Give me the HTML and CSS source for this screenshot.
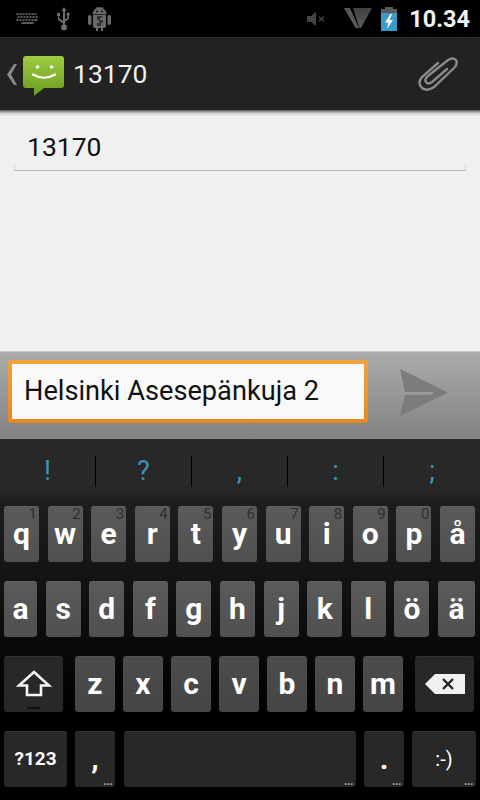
FILE: index.html
```html
<!DOCTYPE html>
<html lang="fi">
<head>
<meta charset="utf-8">
<title>13170</title>
<link rel="stylesheet" href="styles.css">
</head>
<body>
<div class="phone">
  <header class="status">
    <div class="status-left">
      <svg class="ic-kbd" width="23" height="12" viewBox="0 0 22 12"><g fill="#5a5a5a"><path d="M0 0h2v2H0zM3 0h2v2H3zM6 0h2v2H6zM9 0h2v2H9zM12 0h2v2h-2zM15 0h2v2h-2zM18 0h2v2h-2zM1 3h2v2H1zM4 3h2v2H4zM7 3h2v2H7zM10 3h2v2h-2zM13 3h2v2h-2zM16 3h2v2h-2zM19 3h2v2h-2zM0 6h2v2H0zM3 6h2v2H3zM6 6h2v2H6zM9 6h2v2H9zM12 6h2v2h-2zM15 6h2v2h-2zM18 6h3v2h-3zM5 9h12v2H5z"/></g></svg>
      <svg class="ic-usb" width="16" height="24" viewBox="0 0 16 24"><g fill="#6e6e6e"><path d="M8 0l2.500 4H9v14H7V4H5.500z"/><circle cx="8" cy="20.500" r="3"/><path d="M1 6h3v3H3.200v2.600L7 14v2.300L2 13V9H1zM12 5.500a1.700 1.700 0 1 1 0 3.400 1.700 1.700 0 0 1 0-3.400zM11.200 8.500h1.600v3.600L8.500 15v-2.200l2.700-1.500z"/></g></svg>
      <svg class="ic-droid" width="23" height="25" viewBox="0 0 23 25"><path d="M5 8a6.500 6.500 0 0 1 13 0zM8 1l2 3M15 1l-2 3" fill="#6a6a6a" stroke="#6a6a6a" stroke-width=".8"/><path d="M5 9h13v11a2 2 0 0 1-2 2h-1v3h-2v-3h-3v3H8v-3H7a2 2 0 0 1-2-2z" fill="#6a6a6a"/><rect y="9" width="3.500" height="10" rx="1.700" fill="#6a6a6a"/><rect x="19.500" y="9" width="3.500" height="10" rx="1.700" fill="#6a6a6a"/><path d="M9 10h5v2h-2v2h3v3h-2v3H9v-3h2v-3H9z" fill="#333"/><circle cx="9" cy="5.500" r=".9" fill="#000"/><circle cx="14" cy="5.500" r=".9" fill="#000"/></svg>
    </div>
    <div class="status-right">
      <svg class="ic-mute" width="20" height="14" viewBox="0 0 20 14"><path d="M0 4h4l5-4v14l-5-4H0z" fill="#444"/><path d="M12 4.500l5 5M17 4.500l-5 5" stroke="#444" stroke-width="1.300"/></svg>
      <svg class="ic-sig" width="28" height="21" viewBox="0 0 28 21"><defs><linearGradient id="w" x1="0" y1="0" x2="0" y2="1"><stop offset="0" stop-color="#404040"/><stop offset="1" stop-color="#5c5c5c"/></linearGradient></defs><path d="M0 0h6l9 20h-3.500z" fill="#585858"/><path d="M9 0h19l-11 20h-1.500z" fill="url(#w)"/></svg>
      <svg class="ic-bat" width="16" height="24" viewBox="1 0 16 24"><path d="M5 0h8v2h4v5H1V2h4z" fill="#5a5a5a"/><rect x="1" y="6" width="16" height="18" fill="#3a9cc8"/><path d="M10.500 7L5 15.500h3.500L7 22l6-9H9.500L12 7z" fill="#fff"/></svg>
      <span class="clock">10.34</span>
    </div>
  </header>

  <section class="actionbar">
    <div class="title-group">
      <svg class="ic-back" width="11" height="21" viewBox="0 0 11 21"><path d="M8 0h3L5 10.500 11 21H8L1 10.500z" fill="#8a8a8a"/></svg>
      <svg class="ic-msg" width="41" height="40" viewBox="0 0 41 40">
        <defs><linearGradient id="g" x1="0" y1="0" x2="0" y2="1"><stop offset="0" stop-color="#a0cc40"/><stop offset="1" stop-color="#6a9a20"/></linearGradient></defs>
        <path d="M3 0h35a3 3 0 0 1 3 3v26a3 3 0 0 1-3 3H21l-10 8v-8H3a3 3 0 0 1-3-3V3a3 3 0 0 1 3-3z" fill="url(#g)"/>
        <circle cx="14.500" cy="11" r="1.800" fill="#fff"/><circle cx="28.500" cy="11" r="1.800" fill="#fff"/>
        <path d="M10 18.500q11 6.500 22 0" fill="none" stroke="#fff" stroke-width="2.200" stroke-linecap="round"/>
      </svg>
      <span class="title">13170</span>
    </div>
    <svg class="ic-clip" width="40" height="35" viewBox="0 0 40 35"><path d="M29 12L14 25Q10 28 8 25Q6 22 10 19L30 3Q35 0 38 3Q40 7 36 11L16 30Q9 35 4 31Q-1 26 4 20L20 6" fill="none" stroke="#8a8a8a" stroke-width="2.400" stroke-linecap="round"/></svg>
  </section>

  <main class="thread">
    <div class="recipient"><span class="recipient-text">13170</span></div>
  </main>

  <section class="compose">
    <div class="compose-input">Helsinki Asesepänkuja 2</div>
    <svg class="ic-send" width="48" height="48" viewBox="0 0 48 48"><path d="M0 0l48 23.500L0 47l5-21h26v-3H5z" fill="#7c7c7c"/><path d="M5 23h28v2H5z" fill="#9a9a9a"/></svg>
  </section>

  <section class="keyboard">
    <div class="strip">
      <span class="sug">!</span><span class="sug">?</span><span class="sug">,</span><span class="sug">:</span><span class="sug nodiv">;</span>
    </div>
    <div class="rows">
      <div class="row">
        <div class="key"><span>q</span><i class="hint">1</i></div>
        <div class="key"><span>w</span><i class="hint">2</i></div>
        <div class="key"><span>e</span><i class="hint">3</i></div>
        <div class="key"><span>r</span><i class="hint">4</i></div>
        <div class="key"><span>t</span><i class="hint">5</i></div>
        <div class="key"><span>y</span><i class="hint">6</i></div>
        <div class="key"><span>u</span><i class="hint">7</i></div>
        <div class="key"><span>i</span><i class="hint">8</i></div>
        <div class="key"><span>o</span><i class="hint">9</i></div>
        <div class="key"><span>p</span><i class="hint">0</i></div>
        <div class="key"><span>å</span></div>
      </div>
      <div class="row row2">
        <div class="key"><span>a</span></div>
        <div class="key"><span>s</span></div>
        <div class="key"><span>d</span></div>
        <div class="key"><span>f</span></div>
        <div class="key"><span>g</span></div>
        <div class="key"><span>h</span></div>
        <div class="key"><span>j</span></div>
        <div class="key"><span>k</span></div>
        <div class="key"><span>l</span></div>
        <div class="key"><span>ö</span></div>
        <div class="key"><span>ä</span></div>
      </div>
      <div class="row row3">
        <div class="key dark wide">
          <svg width="36" height="28" viewBox="0 0 36 28"><path d="M18 2L33 15.500H25V25H11V15.500H3z" fill="none" stroke="#f4f4f4" stroke-width="2.600"/></svg>
          <b class="shift-led"></b>
        </div>
        <div class="key mid"><span>z</span></div>
        <div class="key mid"><span>x</span></div>
        <div class="key mid"><span>c</span></div>
        <div class="key mid"><span>v</span></div>
        <div class="key mid"><span>b</span></div>
        <div class="key mid"><span>n</span></div>
        <div class="key mid"><span>m</span></div>
        <div class="key dark wide">
          <svg width="40" height="20" viewBox="0 0 40 20"><path d="M10 0h30v20H10L0 10z" fill="#f0f0f0"/><path d="M18 5l10 10M28 5L18 15" stroke="#222" stroke-width="2.400"/></svg>
        </div>
      </div>
      <div class="row row4">
        <div class="key dark sym"><span class="sym-text">?123</span></div>
        <div class="key dark narrow"><span class="punct">,</span><i class="more">...</i></div>
        <div class="key dark space"><i class="more">...</i></div>
        <div class="key dark narrow"><span class="punct">.</span><i class="more">...</i></div>
        <div class="key dark smile"><span class="sym-text thin">:-)</span><i class="more">...</i></div>
      </div>
    </div>
  </section>
</div>
</body>
</html>
```
FILE: styles.css
```css
* { box-sizing: border-box; }
html, body { margin: 0; padding: 0; }
body { width: 480px; height: 800px; overflow: hidden; background: #000; font-family: Roboto, "Liberation Sans", sans-serif; }
.phone { display: flex; flex-direction: column; width: 480px; height: 800px; }

.status { height: 38px; background: #000; display: flex; justify-content: space-between; align-items: center; padding: 0 10px 0 16px; border-bottom: 1px solid #2e2e2e; }
.status-left { display: flex; align-items: center; }
.ic-usb { margin-left: 17px; }
.ic-droid { margin-left: 16px; }
.status-right { display: flex; align-items: center; }
.ic-sig { margin-left: 17px; }
.ic-bat { margin-left: 9px; }
.clock { margin-left: 12px; color: #f2f2f2; font-size: 23.500px; font-weight: 700; }

.actionbar { height: 72px; background: #222; display: flex; align-items: center; justify-content: space-between; padding: 0 22px 0 6px; }
.title-group { display: flex; align-items: center; }
.ic-msg { margin-left: 6px; margin-top: 4px; }
.title { margin: 0 0 2px 9px; color: #f0f0f0; font-size: 26.500px; }
.ic-clip { margin-top: 1px; }

.thread { height: 241px; background: linear-gradient(#555 0, #c8c8c8 3px, #f0f0f0 6px); padding: 0 14px; }
.recipient { height: 61px; padding: 21px 0 0 13px; border-bottom: 1.500px solid #bcbcbc; font-size: 26.500px; color: #111; line-height: 32px; position: relative; }
.recipient::before, .recipient::after { content: ""; position: absolute; bottom: 0; width: 1px; height: 5px; background: #cfcfcf; }
.recipient::before { left: 0; }
.recipient::after { right: 0; }

.compose { height: 88px; background: linear-gradient(#ababab, #828282); border-top: 1px solid #c8c8c8; display: flex; align-items: flex-start; padding: 8px 32px 0 8px; justify-content: space-between; }
.compose-input { width: 360px; height: 63px; background: linear-gradient(#f9f9f9, #f9f9f9) padding-box, linear-gradient(#f3a23c, #e88820) border-box; border: 4px solid transparent; border-radius: 3px; font-size: 27.200px; color: #111; line-height: 55px; padding-left: 12px; }
.ic-send { margin-top: 9px; }

.keyboard { height: 361px; display: flex; flex-direction: column; }
.strip { height: 61px; flex: none; background: linear-gradient(#282828 54px, #1e1e1e); display: flex; padding: 17px 0 0 0; }
.sug { width: 96.200px; height: 31px; border-right: 1px solid #000; color: #3f93b8; font-size: 27px; line-height: 30px; text-align: center; }
.sug.nodiv { border-right: 0; }

.rows { flex: 1; padding: 6px 4px 0; display: flex; flex-direction: column; gap: 19px; background: linear-gradient(#1e1e1e, #000 72%); }
.row { display: flex; gap: 8.600px; height: 56px; }
.key { flex: 0 0 35px; position: relative; display: flex; align-items: center; justify-content: center; border-radius: 3px; background: linear-gradient(#5a5a5a, #505050); box-shadow: inset 0 1px rgba(255,255,255,.05); color: #fff; font-size: 30px; font-weight: 700; line-height: 36px; }
.key span { position: relative; }
.row2 .key:first-child { flex-basis: 33px; }
.row2 .key:last-child { flex-basis: 37px; }
.hint { position: absolute; top: 0; right: 2px; font-size: 15px; font-weight: 400; font-style: normal; color: #303030; line-height: 16px; }
.row3 { gap: 8px; }
.row4 { gap: 8px; }
.key.mid { flex: 0 0 40px; background: linear-gradient(#4c4c4c, #454545); }
.key.dark { background: #282828; }
.key.wide { flex: 0 0 59px; }
.row3 .wide:first-child { margin-right: 4px; }
.row3 .wide:last-child { margin-left: 4px; }
.shift-led { position: absolute; left: 23px; bottom: 3px; width: 13px; height: 2px; background: #111; }
.key.sym { flex: 0 0 63px; }
.key.narrow { flex: 0 0 40px; }
.key.space { flex: 0 0 232px; margin-left: 1px; }
.key.smile { flex: 0 0 64px; }
.sym-text { font-size: 19px; }
.sym-text.thin { font-weight: 400; font-size: 20px; }
.punct { font-size: 30px; }
.more { position: absolute; right: 3px; bottom: 3px; color: #aaa; font-size: 12px; line-height: 6px; font-style: normal; font-weight: 700; letter-spacing: -.5px; }
```
